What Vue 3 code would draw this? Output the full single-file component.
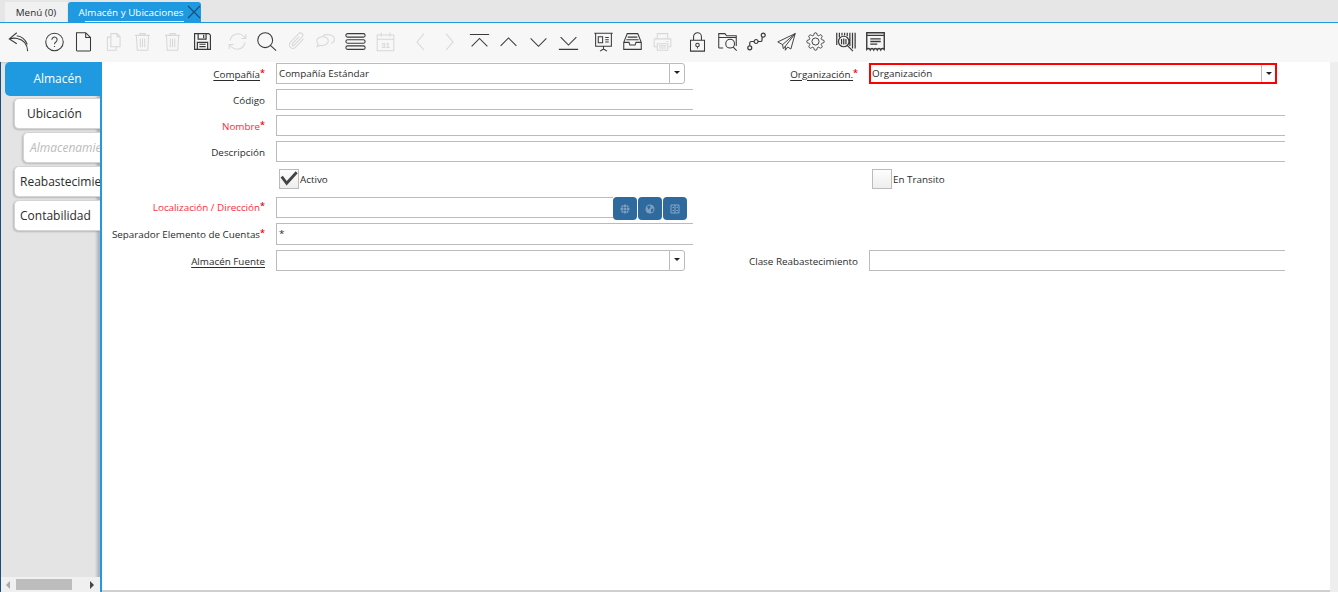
<script setup>
const arc = (cx, cy, r) => `M${cx - r} ${cy}a${r} ${r} 0 1 0 ${r * 2} 0a${r} ${r} 0 1 0 ${-r * 2} 0`

const gear = 'M19.4 15a1.65 1.65 0 0 0 .33 1.82l.06.06a2 2 0 0 1 0 2.83 2 2 0 0 1-2.83 0l-.06-.06a1.65 1.65 0 0 0-1.82-.33 1.65 1.65 0 0 0-1 1.51V21a2 2 0 0 1-4 0v-.09A1.65 1.65 0 0 0 9 19.4a1.65 1.65 0 0 0-1.82.33l-.06.06a2 2 0 0 1-2.83 0 2 2 0 0 1 0-2.83l.06-.06a1.65 1.65 0 0 0 .33-1.82 1.65 1.65 0 0 0-1.51-1H3a2 2 0 0 1 0-4h.09A1.65 1.65 0 0 0 4.6 9a1.65 1.65 0 0 0-.33-1.82l-.06-.06a2 2 0 0 1 0-2.83 2 2 0 0 1 2.83 0l.06.06a1.65 1.65 0 0 0 1.82.33H9a1.65 1.65 0 0 0 1-1.51V3a2 2 0 0 1 4 0v.09a1.65 1.65 0 0 0 1 1.51 1.65 1.65 0 0 0 1.82-.33l.06-.06a2 2 0 0 1 2.83 0 2 2 0 0 1 0 2.83l-.06.06a1.65 1.65 0 0 0-.33 1.82V9a1.65 1.65 0 0 0 1.51 1H21a2 2 0 0 1 0 4h-.09a1.65 1.65 0 0 0-1.51 1z'

const trash = 'M3.5 5h17M9 5V3h6v2M5 5l1 17h12l1-17M9.5 8.5v10M12 8.5v10M14.5 8.5v10'

const tools = [
  { d: 'M10 2L1.500 9l8.500 5.500M2 9c3-1 6-1 8.500-.500 6.500 1.300 11.500 6 12 14.500M10 5.500c4.500.5 9.500 3.500 12 10' },
  { d: arc(12, 12.500, 10) + 'M9 10a3 3 0 1 1 4.600 2.500c-1.100.7-1.600 1.300-1.600 2.600M12 17v1.200', sep: true },
  { d: 'M4 2h10.500L20 7.500V22a.8.8 0 0 1-.8.8H4.800a.8.8 0 0 1-.8-.8zM14.500 2v5.500H20' },
  { d: 'M9 3h7l3.500 3.500V18H9zM16 3v3.500h3.500M9 7H5v15h10v-4', off: true },
  { d: trash, off: true },
  { d: trash, off: true },
  { d: 'M2 2h18l2 2v18H2zM6.500 2v7h10V2M13.500 3.500v4M5.500 22V13h13v9M8 15.500h8M8 18.500h8', wide: true },
  { d: 'M3.500 11a9 9 0 0 1 15.500-5l2.500 2.500M21.500 3.500v5h-5M20.500 13a9 9 0 0 1-15.500 5l-2.500-2.500M2.500 20.500v-5h5', off: true, sep: true },
  { d: arc(10.500, 10.500, 8.500) + 'M16.500 16.500l6.500 6' },
  { d: 'M20 9l-9 9.500a4 4 0 0 1-6-5.500l9.500-10a2.700 2.700 0 0 1 4 3.700l-9 9.500a1.300 1.300 0 0 1-2-1.800l7.500-8', off: true },
  { d: 'M9 5.500c4-2.500 12-1.500 13 3 .6 3-1.500 5-3.500 5.500M15 10c1 3.500-2 6.500-6.500 6.500-1 0-2 0-2.800-.3L2.500 18l1-3.500C1 12.500 1.500 9.500 4 8c4-2.500 10-1.500 11 2z', off: true },
  { d: 'M3 3h18a2 2 0 0 1 0 4H3a2 2 0 0 1 0-4zM3 10h18a2 2 0 0 1 0 4H3a2 2 0 0 1 0-4zM3 17h18a2 2 0 0 1 0 4H3a2 2 0 0 1 0-4z' },
  { d: 'M2.500 4.500h19v18h-19zM2.500 9.500h19M7 2v4.500M17 2v4.500', off: true, label: '31' },
  { d: 'M16 3L8 12.500l8 9.500', off: true, sep: true },
  { d: 'M8 3l8 9.500L8 22', off: true },
  { d: 'M1 4h22M3 17.500l9-9 9 9' },
  { d: 'M3 17l9-9 9 9' },
  { d: 'M3 8.500l9 9 9-9' },
  { d: 'M3 7l9 9 9-9M1 21h22' },
  { d: 'M1.500 2.500h21M3 2.500v15h18v-15M12 17.500v3M8 23l4-2.500 4 2.500M6 6.500h5v7H6zM14 7.500h4M14 10h4M14 12.500h4', sep: true },
  { d: 'M6 3h12l4 10v8H2v-8zM2 13h6l1 3h6l1-3h6M6.500 7h11M5 10h14' },
  { d: 'M6 9V3h12v6M2.500 9h19v9H18M6 18H2.500V9M6 14.500h12V22H6zM8 17h8M8 19.500h8M16.500 12h2', off: true },
  { d: 'M4 10.500h16V23H4zM7.500 10.500V6.500a4.500 4.500 0 0 1 9 0v4M10 16a2 2 0 1 0 4 0a2 2 0 1 0-4 0M12 18v2', sep: true },
  { d: 'M2 19.500V3h7l2 2.500h11V17M2 7.500h20M10 14.500a5 5 0 1 0 10 0a5 5 0 1 0-10 0M18.500 18.500l4 4M2 19.500h5' },
  { d: arc(3.500, 20, 2.500) + arc(11.500, 12, 2.500) + arc(20.500, 4, 2.500) + 'M3.500 17.500v-3.500a2 2 0 0 1 2-2h3.500M14 12h3a2 2 0 0 0 2-2V6.500', wide: true },
  { d: 'M23 2L1 12.500l6 3.500L23 2L10.500 18v5l3-4 4 2.500zM7 16l1 5 2.500-3', small: true },
  { d: gear + arc(12, 12, 4.500), small: true },
  { d: 'M2 2v14M5 2v5M8 2v3M11 2v3M14 2v4M17 2v15M20 2v18M23 2v18M4 12a6 6 0 1 0 12 0a6 6 0 1 0-12 0M7.500 9v6M10 8.500v7M12.500 9v6M14.500 17l6 6', dense: true },
  { d: 'M2 2h20v19c-1.500-1.500-3-1.500-4 .5-1-2-3-2-4 0-1-2-3-2-4 0-1-2-3-2-4 0-1-2-2.500-2-4-.5zM2 5h20M6 9h12M6 12h12M6 15h8', thick: true },
]

const tabs = [
  { name: 'Ubicación', cls: 'child' },
  { name: 'Almacenamiento', cls: 'grand' },
  { name: 'Reabastecimiento', cls: 'child' },
  { name: 'Contabilidad', cls: 'child' },
]
</script>

<template>
  <div class="app">
    <div class="tabbar">
      <div class="tab">Menú (0)</div>
      <div class="tab active">
        <span class="title">Almacén y Ubicaciones</span>
        <svg class="close" width="14" height="14" viewBox="0 0 14 14">
          <path d="M1 1l12 12M13 1L1 13" />
        </svg>
      </div>
    </div>

    <div class="toolbar">
      <button
        v-for="(tool, i) in tools"
        :key="i"
        :class="['tool', { off: tool.off, sep: tool.sep, thick: tool.thick, small: tool.small, dense: tool.dense, wide: tool.wide }]"
      >
        <svg viewBox="0 0 24 24">
          <path :d="tool.d" />
          <text v-if="tool.label" x="12" y="19.500" text-anchor="middle">{{ tool.label }}</text>
        </svg>
      </button>
    </div>

    <div class="main">
      <aside class="side">
        <div class="nav">
          <div class="nav-tab top">Almacén</div>
          <div v-for="tab in tabs" :key="tab.name" :class="['nav-tab', tab.cls]">{{ tab.name }}</div>
        </div>
        <div class="hscroll">
          <span class="arrow left"></span>
          <span class="thumb"></span>
          <span class="arrow right"></span>
        </div>
      </aside>

      <section class="content">
        <div class="form">
          <label class="lbl"><u>Compañía</u><i>*</i></label>
          <div class="combo">
            <div class="input">Compañía Estándar</div>
            <span class="drop"></span>
          </div>
          <label class="lbl"><u>Organización.</u><i>*</i></label>
          <div class="combo focus">
            <div class="input">Organización</div>
            <span class="drop"></span>
          </div>

          <label class="lbl">Código</label>
          <div class="input"></div>
          <div class="rest"></div>

          <label class="lbl req">Nombre<i>*</i></label>
          <div class="input span3"></div>

          <label class="lbl">Descripción</label>
          <div class="input span3"></div>

          <div></div>
          <div class="check">
            <span class="box">
              <svg width="18" height="18" viewBox="0 0 18 18"><path d="M1.700 6.700L6.700 13.300 16.700 2.300" /></svg>
            </span>
            Activo
          </div>
          <div></div>
          <div class="check">
            <span class="box"></span>
            En Transito
          </div>

          <label class="lbl req up">Localización / Dirección<i>*</i></label>
          <div class="locator">
            <div class="input"></div>
            <button class="loc">
              <svg width="10" height="10" viewBox="0 0 10 10"><circle cx="5" cy="5" r="4.500" /><path class="grid" d="M.5 3.500h9M.5 6.500h9M3.500 .5v9M6.500 .5v9" /></svg>
            </button>
            <button class="loc">
              <svg width="10" height="10" viewBox="0 0 10 10"><circle cx="5" cy="5" r="4.500" /><path class="land" d="M2 2.500l3-1 .5 2-2 2zM6 5l2.500-.5L8 7.500 6 8.500z" /></svg>
            </button>
            <button class="loc">
              <svg width="10" height="10" viewBox="0 0 10 10"><path class="book" d="M1 1h8v8H1zM5 1v8M2.500 3.500h1.500M2.500 6.500h1.500M6.500 3.500h1.500M6.500 6.500h1.500" /></svg>
            </button>
          </div>
          <div class="rest"></div>

          <label class="lbl">Separador Elemento de Cuentas<i>*</i></label>
          <div class="input">*</div>
          <div class="rest"></div>

          <label class="lbl"><u>Almacén Fuente</u></label>
          <div class="combo">
            <div class="input"></div>
            <span class="drop"></span>
          </div>
          <label class="lbl">Clase Reabastecimiento</label>
          <div class="input"></div>
        </div>
      </section>
      <div class="strip"></div>
    </div>
  </div>
</template>

<style scoped>
.app {
  width: 1338px;
  height: 592px;
  display: flex;
  flex-direction: column;
  overflow: hidden;
  background: #f7f7f7;
  font-family: "Open Sans", sans-serif;
  font-size: 9.850px;
  color: #2b2b2b;
}

.tabbar {
  height: 22px;
  flex: none;
  display: flex;
  align-items: flex-end;
  gap: 1px;
  padding-left: 5px;
  background: #e6e6e6;
  border-bottom: 1px solid #1f9ae0;
  box-sizing: content-box;
}

.tab {
  height: 20px;
  width: 62px;
  line-height: 20px;
  text-align: center;
  background: #f1f1f1;
}

.tab.active {
  width: 133px;
  display: flex;
  align-items: center;
  background: #1f9ae0;
  color: #fff;
  border-radius: 3px 3px 0 0;
}

.title {
  margin-left: 10px;
  height: 20px;
  width: 106px;
  white-space: nowrap;
  background: linear-gradient(#fff, #fff) 7px bottom / 99px 1px no-repeat;
}

.close {
  margin-left: 3px;
}

.close path {
  stroke: #1a4e7a;
  stroke-width: 1.200;
  fill: none;
}

.toolbar {
  height: 39px;
  flex: none;
  box-sizing: border-box;
  display: flex;
  align-items: center;
  padding: 0 0 2px 4.200px;
  background: #f7f7f7;
}

.tool {
  width: 29.600px;
  height: 30px;
  flex: none;
  padding: 0;
  display: flex;
  align-items: center;
  justify-content: center;
  border: 0;
  background: none;
}

.tool.sep {
  margin-left: 5.500px;
}

.tool svg {
  width: 21px;
  height: 21px;
  fill: none;
  stroke: #3a3a3a;
  stroke-width: 1.200;
}

.tool.small svg {
  width: 19px;
  height: 19px;
}

.tool.wide svg {
  width: 19px;
  height: 19px;
  stroke-width: 1.500;
}

.tool.thick svg {
  stroke-width: 1.600;
}

.tool.dense svg {
  stroke-width: 1.400;
}

.tool.off svg {
  stroke: #d8d8d8;
}

.tool text {
  fill: #d8d8d8;
  stroke: none;
  font-size: 9px;
  font-weight: 700;
}

.main {
  flex: 1;
  min-height: 0;
  display: flex;
}

.side {
  width: 102px;
  flex: none;
  display: flex;
  flex-direction: column;
  box-sizing: border-box;
  background: #e4e4e4;
  border-left: 1px solid #1a4e7a;
  border-right: 2px solid #1f9ae0;
  box-shadow: inset -3px 0 3px rgba(40, 70, 100, .3);
}

.nav {
  flex: 1;
  min-height: 0;
  overflow: hidden;
}

.nav-tab {
  font-size: 12px;
  white-space: nowrap;
  overflow: hidden;
  box-sizing: border-box;
  background: #fff;
  border: 1px solid #d4d4d4;
  border-right: 0;
  border-radius: 5px 0 0 5px;
  box-shadow: -1px 1px 2px rgba(0, 0, 0, .2);
}

.nav-tab.top {
  height: 34px;
  margin: 0 0 -1px 4px;
  padding-left: 10px;
  line-height: 33px;
  text-align: center;
  background: #1f9ae0;
  border: 0;
  box-shadow: none;
  color: #fff;
}

.nav-tab.child {
  height: 31px;
  margin: 3px 0 0 13px;
  padding-left: 12px;
  line-height: 29px;
  color: #2b2b2b;
}

.nav-tab.child:nth-child(4),
.nav-tab.child:nth-child(5) {
  padding-left: 5px;
}

.nav-tab.grand {
  height: 31px;
  margin: 3px 0 0 22px;
  padding-left: 6px;
  line-height: 29px;
  font-size: 12px;
  font-style: italic;
  color: #bbb;
}

.hscroll {
  height: 15px;
  flex: none;
  display: flex;
  align-items: center;
  background: #f0f0f0;
}

.thumb {
  width: 56px;
  height: 11px;
  margin-left: 6px;
  background: #bdbdbd;
}

.arrow {
  width: 0;
  height: 0;
  border-top: 4px solid transparent;
  border-bottom: 4px solid transparent;
}

.arrow.left {
  margin-left: 5px;
  border-right: 4px solid #aaa;
}

.arrow.right {
  margin-left: 18px;
  border-left: 4px solid #444;
}

.content {
  flex: 1;
  background: #fff;
  border-bottom: 2px solid #d0d0d0;
}

.strip {
  width: 8px;
  flex: none;
  background: #eee;
}

.form {
  display: grid;
  grid-template-columns: 163px 417px 154px 416px;
  grid-template-rows: repeat(4, 21px) 25px 21px 22px 21px;
  column-gap: 11px;
  row-gap: 5px;
  margin-top: 1px;
}

.lbl {
  display: flex;
  align-items: center;
  justify-content: flex-end;
  white-space: nowrap;
}

.lbl u {
  text-underline-offset: 2px;
}

.lbl i {
  font-style: normal;
  font-size: 9px;
  font-weight: 600;
  color: #e8000f;
  margin-bottom: 3px;
}

.lbl.req {
  color: #ff2a3c;
}

.lbl.up {
  padding-bottom: 2px;
}

.input {
  min-width: 0;
  flex: 1;
  box-sizing: border-box;
  padding-left: 2px;
  line-height: 19px;
  background: #fff;
  border: 1px solid #bbb;
  border-right: 0;
}

.span3 {
  grid-column: span 3;
}

.combo {
  display: flex;
  width: 409px;
}

.combo.focus {
  width: 408px;
  height: 21px;
  box-sizing: border-box;
  border: 2px solid #f00;
}

.combo.focus .input {
  border: 0;
  line-height: 17px;
  padding-left: 1px;
}

.combo.focus .drop {
  border-width: 0 0 0 1px;
  border-radius: 0;
  width: 13px;
}

.drop {
  width: 14px;
  position: relative;
  flex: none;
  background: #fff;
  border: 1px solid #bbb;
  border-radius: 0 3px 3px 0;
}

.drop::after {
  content: "";
  position: absolute;
  top: 7px;
  left: 4px;
  border-top: 3px solid #222;
  border-left: 3px solid transparent;
  border-right: 3px solid transparent;
}

.rest {
  grid-column: span 2;
}

.check {
  display: flex;
  align-items: center;
  gap: 1px;
  padding: 0 0 1px 3px;
}

.box {
  width: 20px;
  height: 20px;
  box-sizing: border-box;
  display: flex;
  align-items: center;
  justify-content: center;
  background: linear-gradient(#fdfdfd, #eee);
  border: 1px solid #bbb;
}

.box svg path {
  fill: none;
  stroke: #444;
  stroke-width: 2.800;
}

.locator {
  display: flex;
  align-items: flex-start;
  width: 411px;
  height: 23px;
}

.locator .input {
  height: 21px;
}

.loc {
  width: 24px;
  height: 23px;
  flex: none;
  margin-left: 1px;
  padding: 0;
  display: flex;
  align-items: center;
  justify-content: center;
  background: #2e6a9e;
  border: 0;
  border-radius: 4px;
}

.locator .input + .loc {
  margin-left: 0;
}

.loc svg {
  fill: #7d9fbd;
}

.loc .grid {
  stroke: #2e6a9e;
  stroke-width: .6;
}

.loc .book {
  fill: none;
  stroke: #8fb0cc;
  stroke-width: .9;
}

.loc .land {
  fill: #2e6a9e;
}
</style>

<style>
html,
body {
  margin: 0;
}
</style>
